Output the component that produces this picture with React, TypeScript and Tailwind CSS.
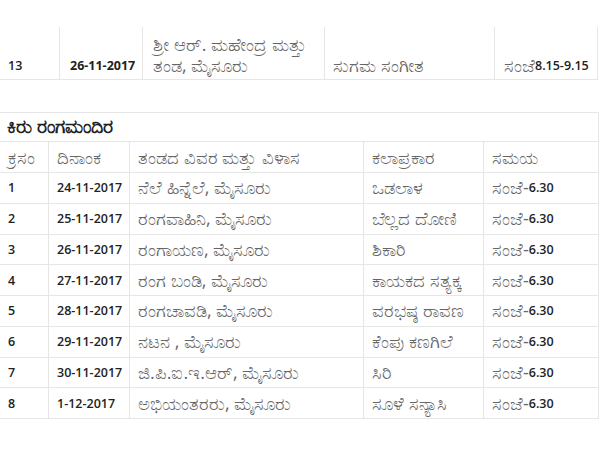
import React from "react";

const rows = [
  ["1", "24-11-2017", "ನೆಲೆ ಹಿನ್ನೆಲೆ, ಮೈಸೂರು", "ಒಡಲಾಳ"],
  ["2", "25-11-2017", "ರಂಗವಾಹಿನಿ, ಮೈಸೂರು", "ಬೆಲ್ಲದ ದೋಣಿ"],
  ["3", "26-11-2017", "ರಂಗಾಯಣ, ಮೈಸೂರು", "ಶಿಕಾರಿ"],
  ["4", "27-11-2017", "ರಂಗ ಬಂಡಿ, ಮೈಸೂರು", "ಕಾಯಕದ ಸತ್ಯಕ್ಕ"],
  ["5", "28-11-2017", "ರಂಗಚಾವಡಿ, ಮೈಸೂರು", "ವರಭಷ್ಠ ರಾವಣ"],
  ["6", "29-11-2017", "ನಟನ , ಮೈಸೂರು", "ಕೆಂಪು ಕಣಗಿಲೆ"],
  ["7", "30-11-2017", "ಜಿ.ಪಿ.ಐ.ಇ.ಆರ್, ಮೈಸೂರು", "ಸಿರಿ"],
  ["8", "1-12-2017", "ಅಭಿಯಂತರರು, ಮೈಸೂರು", "ಸೂಳೆ ಸನ್ಯಾಸಿ"],
];

const cell = "border-r border-[#e6e6e6] flex items-center pl-[8px] whitespace-nowrap overflow-hidden";
const kn = "text-[#666] font-normal text-[18px] leading-[21px]";
const num = "text-[#222] font-semibold text-[12.5px] leading-[21px]";

export default function App() {
  return (
    <div
      className="w-[600px] h-[450px] bg-white overflow-hidden text-[13px]"
      style={{ fontFamily: '"Open Sans", "Noto Sans", sans-serif' }}
    >
      <div className="h-[27px]" />
      {/* top table row */}
      <div className="flex w-[598px] h-[53px] border-b border-[#e6e6e6]">
        <div className={`${cell} w-[60px] items-end pb-[3px] pl-[7px] ${num}`}>13</div>
        <div className={`${cell} w-[83px] items-end pb-[3px] pl-[10px] text-[#222] font-bold text-[12.5px] leading-[21px]`}>26-11-2017</div>
        <div className={`${cell} w-[182px] items-end pb-[3px] pl-[10px] ${kn}`}>
          <div>
            <div>ಶ್ರೀ ಆರ್. ಮಹೇಂದ್ರ ಮತ್ತು</div>
            <div>ತಂಡ, ಮೈಸೂರು</div>
          </div>
        </div>
        <div className={`${cell} w-[170px] items-end pb-[3px] pl-[8px] ${kn}`}>ಸುಗಮ ಸಂಗೀತ</div>
        <div className={`${cell} w-[103px] items-end pb-[3px] pl-[9px]`}>
          <span className={kn}>ಸಂಜೆ</span>
          <span className={num}>8.15-9.15</span>
        </div>
      </div>

      <div className="h-[32px]" />

      {/* second table */}
      <div className="w-[599px] border-t border-[#e6e6e6]">
        <div className="flex h-[29px] border-b border-r border-[#e6e6e6] items-center pb-[2px] pl-[7px] text-[#222] font-bold text-[19px]">
          ಕಿರು ರಂಗಮಂದಿರ
        </div>
        <div className="flex h-[31px] border-b border-[#e6e6e6]">
          <div className={`${cell} w-[49px] pl-[7px] ${kn}`}>ಕ್ರಸಂ</div>
          <div className={`${cell} w-[81px] ${kn}`}>ದಿನಾಂಕ</div>
          <div className={`${cell} w-[234px] ${kn}`}>ತಂಡದ ವಿವರ ಮತ್ತು ವಿಳಾಸ</div>
          <div className={`${cell} w-[120px] ${kn}`}>ಕಲಾಪ್ರಕಾರ</div>
          <div className={`${cell} w-[115px] ${kn}`}>ಸಮಯ</div>
        </div>
        {rows.map((r) => (
          <div key={r[0]} className="flex h-[30.75px] border-b border-[#e6e6e6]">
            <div className={`${cell} w-[49px] pl-[7px] ${num}`}>{r[0]}</div>
            <div className={`${cell} w-[81px] ${num}`}>{r[1]}</div>
            <div className={`${cell} w-[234px] ${kn}`}>{r[2]}</div>
            <div className={`${cell} w-[120px] ${kn}`}>{r[3]}</div>
            <div className={`${cell} w-[115px]`}>
              <span className={kn}>ಸಂಜೆ-</span>
              <span className={num}>6.30</span>
            </div>
          </div>
        ))}
      </div>
    </div>
  );
}
